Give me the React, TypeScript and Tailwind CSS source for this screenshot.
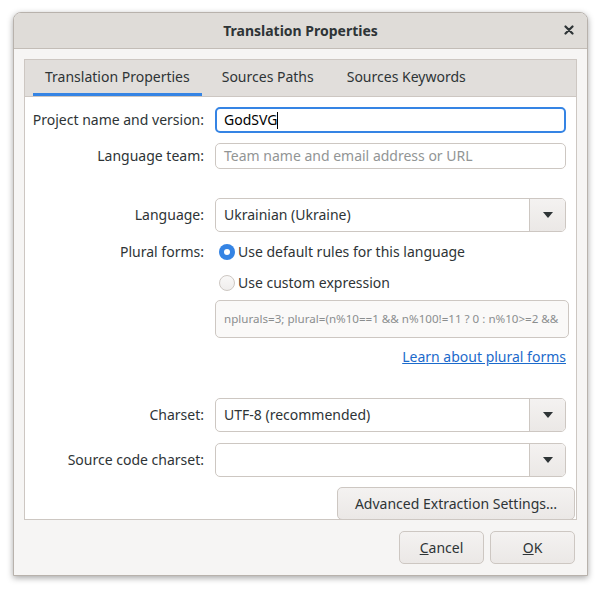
import React from 'react';

const font = { fontFamily: '"Noto Sans", "Open Sans", sans-serif' };

function Arrow() {
  return (
    <svg width="10" height="6" viewBox="0 0 10 6">
      <path d="M0 0 L10 0 L5 6 Z" fill="#2e3436" />
    </svg>
  );
}

function Combo({ value }: { value: string }) {
  return (
    <div className="flex h-[34px] rounded-[5px] border border-[#cdc7c2] bg-white overflow-hidden">
      <div className="flex-1 flex items-center pl-[8px] text-[#2e3436]">{value}</div>
      <div className="w-[36px] flex items-center justify-center border-l border-[#cdc7c2] bg-gradient-to-b from-[#f4f2f1] to-[#ebe8e6]">
        <Arrow />
      </div>
    </div>
  );
}

function Radio({ checked, label }: { checked?: boolean; label: string }) {
  return (
    <div className="flex items-center gap-[3px] pl-[4px]">
      {checked ? (
        <span className="w-[16px] h-[16px] rounded-full bg-[#3584e4] flex items-center justify-center">
          <span className="w-[6px] h-[6px] rounded-full bg-white" />
        </span>
      ) : (
        <span className="w-[16px] h-[16px] rounded-full border border-[#cdc7c2] bg-gradient-to-b from-[#f9f8f7] to-[#efedec]" />
      )}
      <span className="text-[#2e3436]">{label}</span>
    </div>
  );
}

function Row({ label, children, className = '' }: { label: string; children?: React.ReactNode; className?: string }) {
  return (
    <div className={`flex items-center ${className}`}>
      <div className="w-[190px] shrink-0 text-right text-[#2e3436] pr-[11px] whitespace-nowrap">{label}</div>
      <div className="flex-1">{children}</div>
    </div>
  );
}

export default function App() {
  return (
    <div className="w-[601px] h-[592px] bg-white pt-[12px] pl-[13px] text-[14px] leading-[20px]" style={font}>
      <div className="w-[575px] h-[564px] flex flex-col rounded-t-[8px] border border-[#b8b2ac] bg-[#f6f5f4] shadow-[0_2px_6px_rgba(0,0,0,0.35)] overflow-hidden">
        {/* Title bar */}
        <div className="h-[36px] shrink-0 flex items-center justify-center relative bg-[#dfdcd8] border-b border-[#c3bdb7]">
          <span className="font-bold text-[14px] text-[#2e3436]">Translation Properties</span>
          <svg className="absolute right-[13px] top-[12px]" width="10" height="10" viewBox="0 0 10 10">
            <path d="M1.5 1.5 L8.5 8.5 M8.5 1.5 L1.5 8.5" stroke="#2e3436" strokeWidth="2.2" strokeLinecap="round" />
          </svg>
        </div>

        <div className="flex-1 flex flex-col px-[10px] pt-[10px] pb-[11px]">
          {/* Notebook */}
          <div className="h-[461px] shrink-0 flex flex-col border border-[#cdc7c2] bg-white">
            <div className="h-[37px] shrink-0 flex items-end bg-[#e1dedb] border-b border-[#cdc7c2] pl-[8px]">
              <div className="h-[35px] px-[12px] flex items-center border-b-[3px] border-[#3584e4] text-[#2e3436]">Translation Properties</div>
              <div className="h-[35px] pl-[20px] pr-[16px] flex items-center border-b-[3px] border-transparent text-[#2e3436]">Sources Paths</div>
              <div className="h-[35px] pl-[17px] pr-[16px] flex items-center border-b-[3px] border-transparent text-[#2e3436]">Sources Keywords</div>
            </div>

            <div className="flex-1 flex flex-col pr-[10px] pt-[10px]">
              <Row label="Project name and version:">
                <div className="h-[26px] rounded-[5px] border-2 border-[#3584e4] flex items-center pl-[7px] text-black">
                  GodSVG<span className="w-px h-[17px] bg-black" />
                </div>
              </Row>
              <Row label="Language team:" className="mt-[10px]">
                <div className="h-[26px] rounded-[5px] border border-[#cdc7c2] flex items-center pl-[8px] text-[#929595]">
                  Team name and email address or URL
                </div>
              </Row>
              <Row label="Language:" className="mt-[29px]">
                <Combo value="Ukrainian (Ukraine)" />
              </Row>
              <Row label="Plural forms:" className="mt-[10px]">
                <Radio checked label="Use default rules for this language" />
              </Row>
              <Row label="" className="mt-[11px]">
                <Radio label="Use custom expression" />
              </Row>
              <div className="flex mt-[7px]">
                <div className="w-[190px] shrink-0" />
                <div className="flex-1 -mr-[3px] h-[38px] rounded-[5px] border border-[#cdc7c2] bg-[#faf9f8] flex items-center pl-[8px] text-[11.6px] text-[#8b8e8f] whitespace-nowrap overflow-hidden">
                  nplurals=3; plural=(n%10==1 &amp;&amp; n%100!=11 ? 0 : n%10&gt;=2 &amp;&amp;
                </div>
              </div>
              <div className="flex justify-end mt-[9px]">
                <span className="text-[#1b6acb] underline">Learn about plural forms</span>
              </div>
              <Row label="Charset:" className="mt-[31px]">
                <Combo value="UTF-8 (recommended)" />
              </Row>
              <Row label="Source code charset:" className="mt-[11px]">
                <Combo value="" />
              </Row>
              <div className="flex justify-end mt-[10px] -mr-[9px]">
                <button className="h-[33px] w-[238px] rounded-[5px] border border-[#cdc7c2] bg-gradient-to-b from-[#f4f2f1] to-[#ebe8e6] text-[#2e3436]">
                  Advanced Extraction Settings…
                </button>
              </div>
            </div>
          </div>

          {/* Dialog buttons */}
          <div className="flex justify-end gap-[6px] mt-[11px] pr-[2px]">
            <button className="w-[85px] h-[33px] rounded-[5px] border border-[#cdc7c2] bg-gradient-to-b from-[#f4f2f1] to-[#ebe8e6] text-[#2e3436]">
              <span className="underline">C</span>ancel
            </button>
            <button className="w-[85px] h-[33px] rounded-[5px] border border-[#cdc7c2] bg-gradient-to-b from-[#f4f2f1] to-[#ebe8e6] text-[#2e3436]">
              <span className="underline">O</span>K
            </button>
          </div>
        </div>
      </div>
    </div>
  );
}
